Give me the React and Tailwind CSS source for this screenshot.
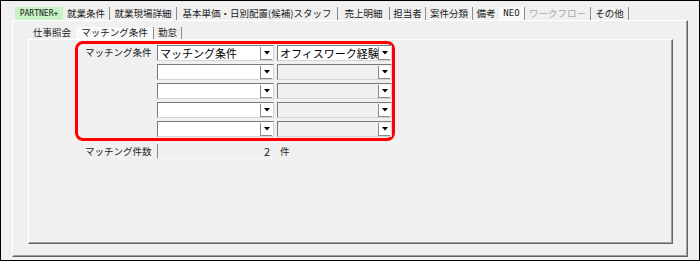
import React from 'react'

const jp = { fontFamily: '"Noto Sans CJK JP", "Noto Sans", sans-serif' }

const topTabs = [
  { label: '就業条件', w: 'w-[47px]' },
  { label: '就業現場詳細', w: 'w-[67px]' },
  { label: '基本単価・日別配置(候補)スタッフ', w: 'w-[161px]' },
  { label: '売上明細', w: 'w-[52px]' },
  { label: '担当者', w: 'w-[36px]' },
  { label: '案件分類', w: 'w-[47px]' },
]

function Tab({ label, w, className = '' }) {
  return (
    <div className={`${w} h-full flex items-center justify-center border-r border-[#8c8c8c] ${className}`}>
      <span className="leading-none">{label}</span>
    </div>
  )
}

function Combo({ text, disabled, w }) {
  return (
    <div
      className={`${w} h-[16px] flex border border-t-[#7a7a7a] border-l-[#7a7a7a] border-r-[#d4d4d4] border-b-[#d4d4d4] ${
        disabled ? 'bg-[#f0f0f0]' : 'bg-white'
      }`}
    >
      <div className="flex-1 overflow-hidden whitespace-nowrap pl-[2px] text-[11px] leading-[14px] text-black">
        {text}
      </div>
      <div className="w-[12px] h-[13px] mt-[1px] mr-[1px] flex items-center justify-center bg-white border-l border-b border-[#8a8a8a]">
        <svg width="6" height="4" viewBox="0 0 6 4">
          <path d="M0 0H6L3 3.5Z" fill="#000" />
        </svg>
      </div>
    </div>
  )
}

export default function App() {
  const rows = [
    { a: 'マッチング条件', b: 'オフィスワーク経験者', bDisabled: false },
    { a: '', b: '', bDisabled: true },
    { a: '', b: '', bDisabled: true },
    { a: '', b: '', bDisabled: true },
    { a: '', b: '', bDisabled: true },
  ]

  return (
    <div style={jp} className="w-[700px] h-[261px] border border-black bg-[#f0f0f0] text-[9.5px] text-[#202020] overflow-hidden">
      <div className="ml-[11px] mt-[6px]">
        {/* top tabs */}
        <div className="flex h-[13px] ml-[3px]">
          <div className="w-[48px] h-full flex items-center justify-center bg-[#c6f2c6]">
            <span className="leading-none text-[8px]" style={{ fontFamily: '"DejaVu Sans Mono", monospace' }}>
              PARTNER+
            </span>
          </div>
          {topTabs.map((t) => (
            <Tab key={t.label} {...t} />
          ))}
          <div className="w-[26px] h-full flex items-center justify-center">
            <span className="leading-none">備考</span>
          </div>
          <div className="w-[26px] h-full flex items-center justify-center border-r border-[#8c8c8c] bg-[#fafafa]">
            <span className="leading-none text-[9px]" style={{ fontFamily: '"DejaVu Sans Mono", monospace' }}>
              NEO
            </span>
          </div>
          <Tab label="ワークフロー" w="w-[66px]" className="text-[#a8a8a8]" />
          <Tab label="その他" w="w-[38px]" />
        </div>

        {/* outer panel */}
        <div className="w-[676px] h-[237px] border border-t-white border-l-white border-r-[#646464] border-b-[#646464] shadow-[inset_-1px_-1px_0_#a0a0a0] pl-[15px] pt-[6px]">
          {/* sub tabs */}
          <div className="flex h-[12px]">
            <div className="w-[48px] h-full flex items-center justify-center">
              <span className="leading-none">仕事照会</span>
            </div>
            <Tab label="マッチング条件" w="w-[78px]" className="bg-[#fafafa]" />
            <Tab label="勤怠" w="w-[28px]" />
          </div>

          {/* inner panel */}
          <div className="w-[645px] h-[205px] border border-t-white border-l-white border-r-[#646464] border-b-[#646464] shadow-[inset_-1px_-1px_0_#a0a0a0] pl-[46px] pt-[1px]">
            <div className="w-[320px] h-[100px] border-[3px] border-[#ff0000] rounded-[8px] pl-[7px] pt-[1px] flex">
              <div className="w-[72px] pt-[3px] leading-none">マッチング条件</div>
              <div className="flex flex-col gap-[3px]">
                {rows.map((r, i) => (
                  <div key={i} className="flex gap-[3px]">
                    <Combo text={r.a} w="w-[117px]" />
                    <Combo text={r.b} disabled={r.bDisabled} w="w-[115px]" />
                  </div>
                ))}
              </div>
            </div>

            {/* count row */}
            <div className="flex items-center h-[15px] mt-[3px] pl-[10px]">
              <div className="w-[72px] leading-none">マッチング件数</div>
              <div className="w-[117px] h-[15px] border-l border-[#8a8a8a] border-b border-b-[#fafafa] flex items-center justify-end pr-[4px] text-[11px] leading-none">
                2
              </div>
              <span className="ml-[6px] leading-none">件</span>
            </div>
          </div>
        </div>
      </div>
    </div>
  )
}
